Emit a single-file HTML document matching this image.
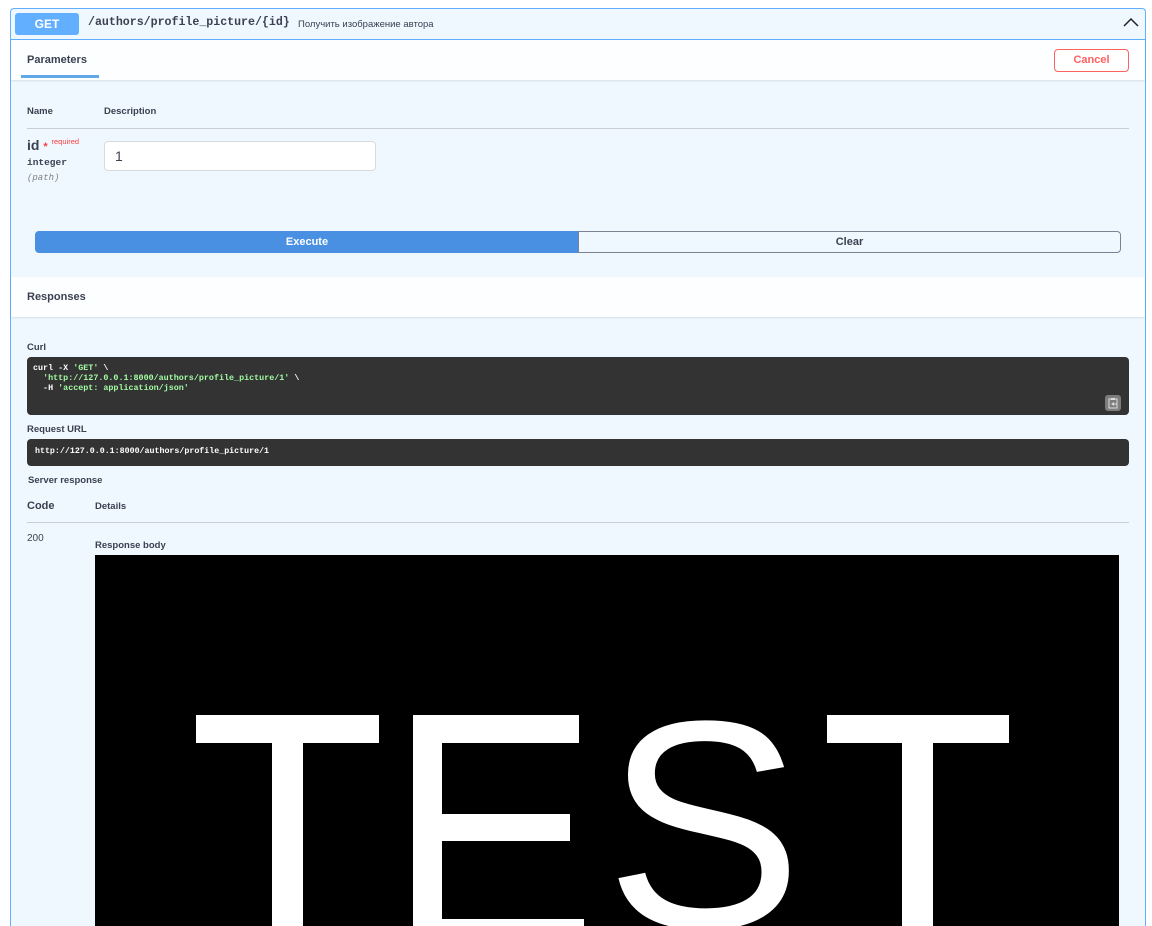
<!DOCTYPE html>
<html style="width:1152px;height:926px;overflow:hidden"><head><meta charset="utf-8"><style>
*{margin:0;padding:0;box-sizing:border-box}
body{width:1152px;height:926px;overflow:hidden;background:#fff;font-family:"Liberation Sans",sans-serif;color:#3b4151;position:relative}
.a{position:absolute;white-space:nowrap}
.mono{font-family:"Liberation Mono","DejaVu Sans Mono",monospace}
</style></head><body>
<div class="a" style="left:10px;top:8px;width:1136px;height:918px;border:1px solid #61affe;border-bottom:none;border-radius:4px 4px 0 0;background:#eff7ff"></div>
<div class="a" style="left:11px;top:39px;width:1134px;height:1px;background:#61affe"></div>
<div class="a" style="left:15px;top:13px;width:64px;height:22px;background:#61affe;border-radius:3px;color:#fff;font-size:12px;font-weight:bold;text-align:center;line-height:22px">GET</div>
<div class="a mono" style="left:88px;top:16px;font-size:11.6px;font-weight:bold;color:#3b4151">/authors/profile_picture/{id}</div>
<div class="a" style="left:298px;top:19px;font-size:9.5px;color:#3b4151">Получить изображение автора</div>
<svg class="a" style="left:1123px;top:16px" width="16" height="12" viewBox="0 0 16 12"><path d="M1 10 L8 3 L15 10" fill="none" stroke="#222" stroke-width="1.5"/></svg>
<div class="a" style="left:11px;top:40px;width:1134px;height:40px;background:#fcfeff;box-shadow:0 1px 2px rgba(0,0,0,.1)"></div>
<div class="a" style="left:27px;top:54px;font-size:11px;font-weight:bold">Parameters</div>
<div class="a" style="left:21px;top:75px;width:78px;height:3px;background:#61a8e8"></div>
<div class="a" style="left:1054px;top:49px;width:75px;height:23px;border:1px solid #ff6060;border-radius:4px;color:#ff6060;font-size:11px;font-weight:bold;text-align:center;line-height:21px;background:#fff">Cancel</div>
<div class="a" style="left:27px;top:106px;font-size:9.5px;font-weight:bold">Name</div>
<div class="a" style="left:104px;top:106px;font-size:9.5px;font-weight:bold">Description</div>
<div class="a" style="left:27px;top:128px;width:1102px;height:1px;background:#c9ced6"></div>
<div class="a" style="left:27px;top:137px;font-size:14px;font-weight:bold">id <span style="color:#f93e3e;font-size:11px">*</span> <span style="color:#f93e3e;font-size:7.5px;vertical-align:6px;font-weight:normal">required</span></div>
<div class="a mono" style="left:27px;top:157px;font-size:9.5px;font-weight:bold">integer</div>
<div class="a mono" style="left:27px;top:173px;font-size:9px;font-style:italic;color:#808080">(path)</div>
<div class="a" style="left:104px;top:141px;width:272px;height:30px;background:#fff;border:1px solid #d9d9d9;border-radius:4px;font-size:14px;padding:6px 0 0 10px">1</div>
<div class="a" style="left:35px;top:231px;width:544px;height:22px;background:#4990e2;border-radius:4px 0 0 4px;color:#fff;font-size:11px;font-weight:bold;text-align:center;line-height:22px">Execute</div>
<div class="a" style="left:578px;top:231px;width:543px;height:22px;border:1px solid #7d8293;border-radius:0 4px 4px 0;background:#eff7ff;font-size:11px;font-weight:bold;text-align:center;line-height:20px">Clear</div>
<div class="a" style="left:11px;top:277px;width:1134px;height:40px;background:#fcfeff;box-shadow:0 1px 2px rgba(0,0,0,.1)"></div>
<div class="a" style="left:27px;top:291px;font-size:11px;font-weight:bold">Responses</div>
<div class="a" style="left:27px;top:342px;font-size:9.5px;font-weight:bold">Curl</div>
<div class="a mono" style="left:27px;top:357px;width:1102px;height:58px;background:#333;border-radius:4px;color:#fff;font-size:8.4px;font-weight:bold;padding:6px 6px;line-height:10px;white-space:pre">curl -X <span style="color:#a2fca2">'GET'</span> \
  <span style="color:#a2fca2">'http://127.0.0.1:8000/authors/profile_picture/1'</span> \
  -H <span style="color:#a2fca2">'accept: application/json'</span></div>
<div class="a" style="left:1105px;top:395px;width:16px;height:16px;background:#7d7d7d;border-radius:3px"><svg width="16" height="16" viewBox="0 0 16 16"><rect x="4" y="4" width="8" height="9" fill="none" stroke="#ddd" stroke-width="1"/><rect x="6" y="3" width="4" height="2" fill="#ddd"/><path d="M7 9h5M9 7.5l-2 1.5 2 1.5" stroke="#ddd" fill="none"/></svg></div>
<div class="a" style="left:27px;top:424px;font-size:9.5px;font-weight:bold">Request URL</div>
<div class="a mono" style="left:27px;top:439px;width:1102px;height:27px;background:#333;border-radius:4px;color:#fff;font-size:8.3px;font-weight:bold;padding:8px 0 0 8px">http://127.0.0.1:8000/authors/profile_picture/1</div>
<div class="a" style="left:28px;top:475px;font-size:9.5px;font-weight:bold">Server response</div>
<div class="a" style="left:27px;top:500px;font-size:11px;font-weight:bold">Code</div>
<div class="a" style="left:95px;top:501px;font-size:9.5px;font-weight:bold">Details</div>
<div class="a" style="left:27px;top:522px;width:1102px;height:1px;background:#c9ced6"></div>
<div class="a" style="left:27px;top:533px;font-size:10px">200</div>
<div class="a" style="left:95px;top:540px;font-size:9.5px;font-weight:bold">Response body</div>
<div class="a" style="left:95px;top:555px;width:1024px;height:371px;overflow:hidden;background:#000">
<svg style="display:block;overflow:hidden" width="1024" height="371" viewBox="95 555 1024 371">
<g fill="#fff">
<rect x="196" y="715" width="183" height="28"/><rect x="272" y="715" width="31" height="211"/>
<rect x="413" y="715" width="29" height="211"/><rect x="413" y="715" width="166" height="28"/><rect x="413" y="814" width="157" height="27"/><rect x="413" y="919" width="171" height="7"/>
<rect x="827" y="715" width="182" height="28"/><rect x="902" y="715" width="31" height="211"/>
<text x="0" y="0" font-family="Liberation Sans" font-size="296" transform="translate(605 927)">S</text>
</g></svg></div>
</body></html>
